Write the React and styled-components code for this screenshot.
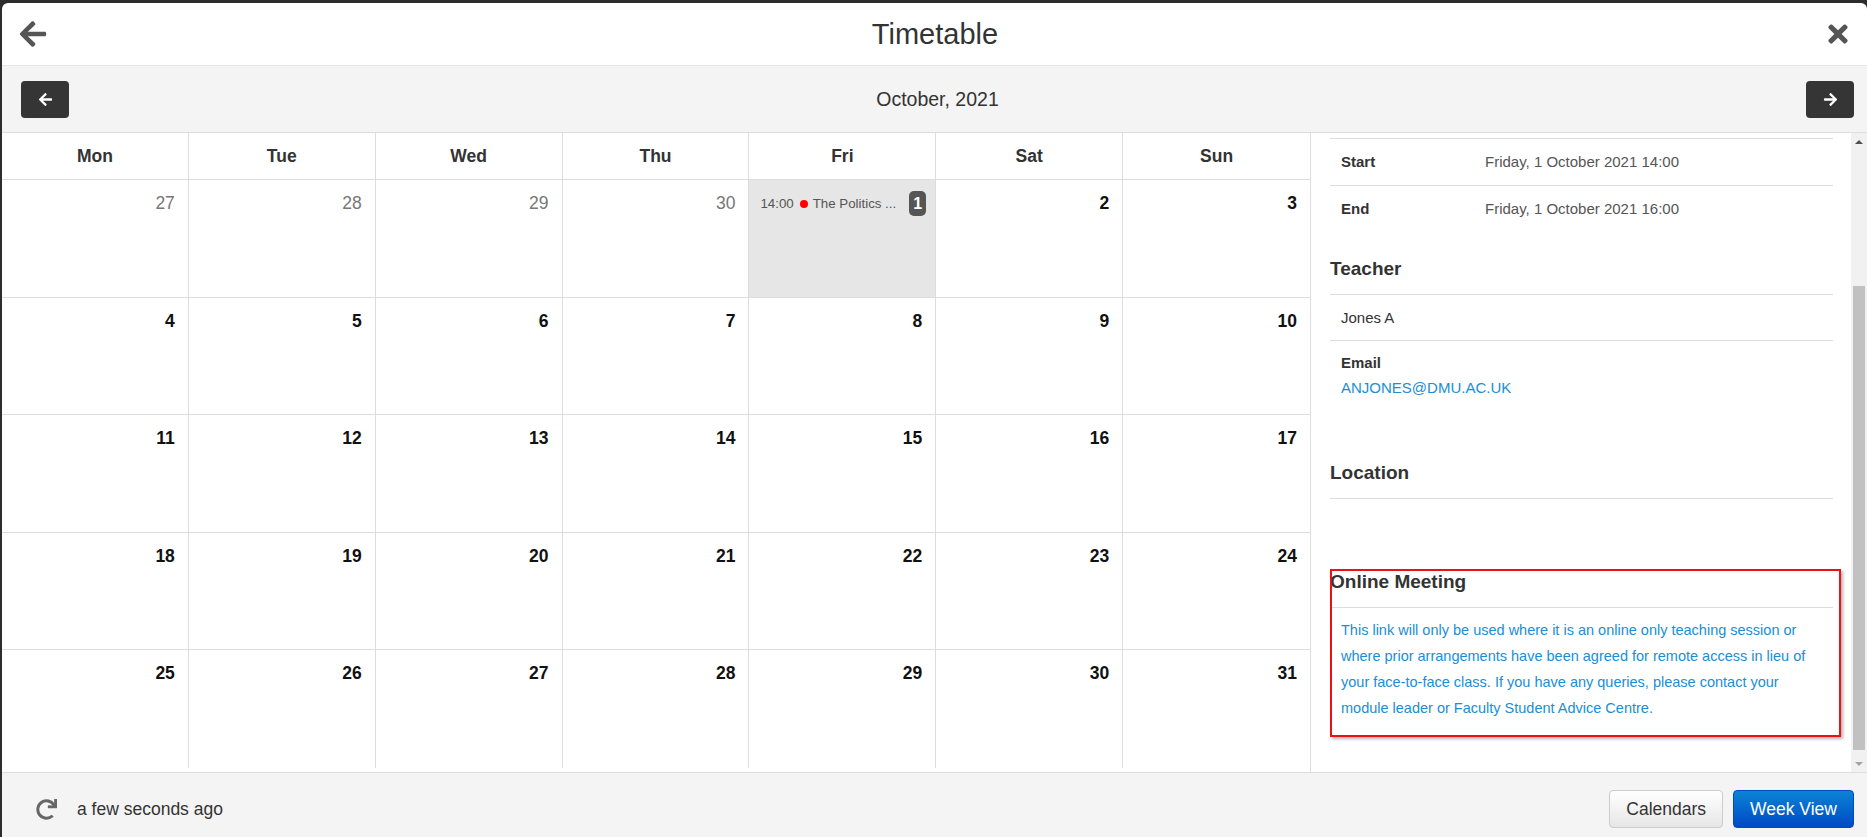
import React from "react";
import styled, { createGlobalStyle } from "styled-components";
import { FaArrowLeft, FaArrowRight, FaTimes, FaRedo } from "react-icons/fa";

const GlobalStyle = createGlobalStyle`
  html, body {
    margin: 0;
    padding: 0;
    background: #2d2d2d;
  }
  body {
    font-family: "Liberation Sans", Arial, sans-serif;
    color: #333;
    overflow: hidden;
  }
  * {
    box-sizing: border-box;
  }
`;

const Modal = styled.div`
  margin: 3px 0 0 2px;
  height: calc(100vh - 3px);
  background: #fff;
  border-radius: 6px 6px 0 0;
  display: flex;
  flex-direction: column;
  overflow: hidden;
`;

const Header = styled.header`
  flex: 0 0 63px;
  display: grid;
  grid-template-columns: 1fr auto 1fr;
  align-items: center;
  padding: 0 15px 0 16px;
  border-bottom: 1px solid #e5e5e5;
`;

const Title = styled.h1`
  margin: 0;
  font-size: 29px;
  font-weight: normal;
  color: #333;
`;

const HeaderIcon = styled.span`
  display: flex;
  color: #555;
  justify-self: ${p => (p.$end ? "end" : "start")};
`;

const Toolbar = styled.div`
  flex: 0 0 67px;
  display: grid;
  grid-template-columns: 1fr auto 1fr;
  align-items: center;
  padding: 0 13px 0 19px;
  background: #f4f4f4;
  border-bottom: 1px solid #ddd;
`;

const NavButton = styled.button`
  width: 48px;
  height: 37px;
  border: 0;
  border-radius: 4px;
  background: #353535;
  color: #fff;
  display: flex;
  align-items: center;
  justify-content: center;
  justify-self: ${p => (p.$end ? "end" : "start")};
  padding: 0;
`;

const Month = styled.div`
  font-size: 19.5px;
  color: #333;
`;

const Main = styled.div`
  flex: 1;
  display: flex;
  min-height: 0;
`;

const Calendar = styled.div`
  flex: 1;
  display: grid;
  grid-template-columns: repeat(7, 1fr);
  grid-template-rows: 47px repeat(5, 117.5px);
  align-content: start;
`;

const DayHead = styled.div`
  display: flex;
  align-items: center;
  justify-content: center;
  font-size: 17.5px;
  font-weight: bold;
  color: #333;
  border-bottom: 1px solid #ddd;
  &:not(:nth-child(7n)) {
    border-right: 1px solid #ddd;
  }
`;

const DayCell = styled.div`
  background: ${p => (p.$active ? "#e6e6e6" : "#fff")};
  padding: 11px 13px 0 11px;
  border-bottom: ${p => (p.$last ? "0" : "1px solid #ddd")};
  &:not(:nth-child(7n)) {
    border-right: 1px solid #ddd;
  }
`;

const DateNum = styled.div`
  text-align: right;
  font-size: 17.5px;
  line-height: 24px;
  font-weight: ${p => (p.$muted ? "normal" : "bold")};
  color: ${p => (p.$muted ? "#777" : "#111")};
`;

const EventRow = styled.div`
  display: flex;
  align-items: center;
  margin-right: -4px;
  gap: 6px;
`;

const EventText = styled.div`
  flex: 1;
  font-size: 13.3px;
  color: #555;
  white-space: nowrap;
  overflow: hidden;
  display: flex;
  align-items: center;
`;

const Dot = styled.span`
  width: 8px;
  height: 8px;
  border-radius: 50%;
  background: #f00;
  margin: 0 5px 0 6px;
`;

const Badge = styled.span`
  min-width: 17px;
  height: 25px;
  border-radius: 5px;
  background: #555;
  color: #fff;
  font-weight: bold;
  font-size: 16px;
  display: flex;
  align-items: center;
  justify-content: center;
`;

const Panel = styled.aside`
  flex: 0 0 557px;
  display: flex;
  border-left: 1px solid #ddd;
`;

const PanelBody = styled.div`
  flex: 1;
  overflow: hidden;
  padding: 5px 18px 0 19px;
`;

const DetailRow = styled.div`
  display: grid;
  grid-template-columns: 144px 1fr;
  padding: 14px 11px;
  line-height: 18px;
  font-size: 15px;
  border-top: 1px solid #ddd;
`;

const Label = styled.div`
  font-weight: bold;
  color: #333;
`;

const Value = styled.div`
  color: #555;
`;

const Section = styled.section`
  position: relative;
  margin-top: ${p => (p.$gap !== undefined ? p.$gap : 26)}px;
`;

const SectionTitle = styled.h3`
  margin: 0;
  font-size: 19px;
  line-height: 21px;
  font-weight: bold;
  color: #333;
  padding-bottom: 15px;
  border-bottom: 1px solid #ddd;
`;

const Line = styled.div`
  padding: 13px 11px;
  font-size: 15px;
  line-height: 19px;
  color: #333;
  border-bottom: 1px solid #ddd;
`;

const Block = styled.div`
  padding: 13px 11px 14px;
  font-size: 15px;
  line-height: 18px;
  min-height: ${p => p.$min || 0}px;
`;

const Link = styled.a`
  display: block;
  margin-top: 7px;
  color: #1a8ed6;
  text-decoration: none;
`;

const Note = styled.p`
  margin: 0;
  padding: 9px 11px 0;
  font-size: 14.5px;
  line-height: 26px;
  color: #1a8ed6;
`;

/* red annotation frame drawn over the online meeting section */
const Highlight = styled.div`
  position: absolute;
  left: 0;
  right: -8px;
  top: -2px;
  bottom: -16px;
  border: 2px solid #ee1111;
  box-shadow: 2px 2px 3px rgba(0, 0, 0, 0.3);
  pointer-events: none;
`;

const Scrollbar = styled.div`
  flex: 0 0 16px;
  display: flex;
  flex-direction: column;
  background: #f1f1f1;
`;

const ScrollArrow = styled.div`
  flex: 0 0 17px;
  display: flex;
  align-items: center;
  justify-content: center;
  &::after {
    content: "";
    border-left: 4px solid transparent;
    border-right: 4px solid transparent;
    ${p =>
      p.$down
        ? "border-top: 4px solid #a3a3a3;"
        : "border-bottom: 4px solid #505050;"}
  }
`;

const Track = styled.div`
  flex: 1;
  display: flex;
  padding: 136px 2px 5px;
`;

const Thumb = styled.div`
  flex: 1;
  background: #c1c1c1;
`;

const Footer = styled.footer`
  flex: 0 0 65px;
  display: flex;
  align-items: center;
  padding: 8px 13px 0 34px;
  background: #f4f4f4;
  border-top: 1px solid #ddd;
`;

const Refresh = styled.span`
  display: flex;
  color: #666;
`;

const Updated = styled.span`
  margin-left: 20px;
  font-size: 17.5px;
  color: #333;
  flex: 1;
`;

const Button = styled.button`
  height: 38px;
  padding: 0 16px;
  margin-left: 10px;
  border-radius: 4px;
  font-family: inherit;
  font-size: 17.5px;
  border: 1px solid ${p => (p.$primary ? "#0048c4" : "#ccc")};
  color: ${p => (p.$primary ? "#fff" : "#333")};
  background: ${p =>
    p.$primary
      ? "linear-gradient(#0a84d4, #0049c6)"
      : "linear-gradient(#fff, #e6e6e6)"};
`;

const dayNames = ["Mon", "Tue", "Wed", "Thu", "Fri", "Sat", "Sun"];

const days = [
  ...[27, 28, 29, 30].map(d => ({ d, muted: true })),
  ...Array.from({ length: 31 }, (_, i) => ({ d: i + 1 })),
];

export default function App() {
  return (
    <>
      <GlobalStyle />
      <Modal>
        <Header>
          <HeaderIcon>
            <FaArrowLeft size={30} />
          </HeaderIcon>
          <Title>Timetable</Title>
          <HeaderIcon $end>
            <FaTimes size={28} />
          </HeaderIcon>
        </Header>
        <Toolbar>
          <NavButton>
            <FaArrowLeft size={15} />
          </NavButton>
          <Month>October, 2021</Month>
          <NavButton $end>
            <FaArrowRight size={15} />
          </NavButton>
        </Toolbar>
        <Main>
          <Calendar>
            {dayNames.map(n => (
              <DayHead key={n}>{n}</DayHead>
            ))}
            {days.map((day, i) => {
              const last = i >= 28;
              if (!day.muted && day.d === 1) {
                return (
                  <DayCell key={i} $active $last={last}>
                    <EventRow>
                      <EventText>
                        14:00
                        <Dot />
                        The Politics ...
                      </EventText>
                      <Badge>1</Badge>
                    </EventRow>
                  </DayCell>
                );
              }
              return (
                <DayCell key={i} $last={last}>
                  <DateNum $muted={day.muted}>{day.d}</DateNum>
                </DayCell>
              );
            })}
          </Calendar>
          <Panel>
            <PanelBody>
              <Section $gap={0}>
                <DetailRow>
                  <Label>Start</Label>
                  <Value>Friday, 1 October 2021 14:00</Value>
                </DetailRow>
                <DetailRow>
                  <Label>End</Label>
                  <Value>Friday, 1 October 2021 16:00</Value>
                </DetailRow>
              </Section>
              <Section>
                <SectionTitle>Teacher</SectionTitle>
                <Line>Jones A</Line>
                <Block>
                  <Label>Email</Label>
                  <Link href="#">ANJONES@DMU.AC.UK</Link>
                </Block>
              </Section>
              <Section $gap={51}>
                <SectionTitle>Location</SectionTitle>
                <Block $min={46} />
              </Section>
              <Section>
                <SectionTitle>Online Meeting</SectionTitle>
                <Note>
                  This link will only be used where it is an online only teaching
                  session or where prior arrangements have been agreed for remote
                  access in lieu of your face-to-face class. If you have any
                  queries, please contact your module leader or Faculty Student
                  Advice Centre.
                </Note>
                <Highlight />
              </Section>
            </PanelBody>
            <Scrollbar>
              <ScrollArrow />
              <Track>
                <Thumb />
              </Track>
              <ScrollArrow $down />
            </Scrollbar>
          </Panel>
        </Main>
        <Footer>
          <Refresh>
            <FaRedo size={21} />
          </Refresh>
          <Updated>a few seconds ago</Updated>
          <Button>Calendars</Button>
          <Button $primary>Week View</Button>
        </Footer>
      </Modal>
    </>
  );
}
